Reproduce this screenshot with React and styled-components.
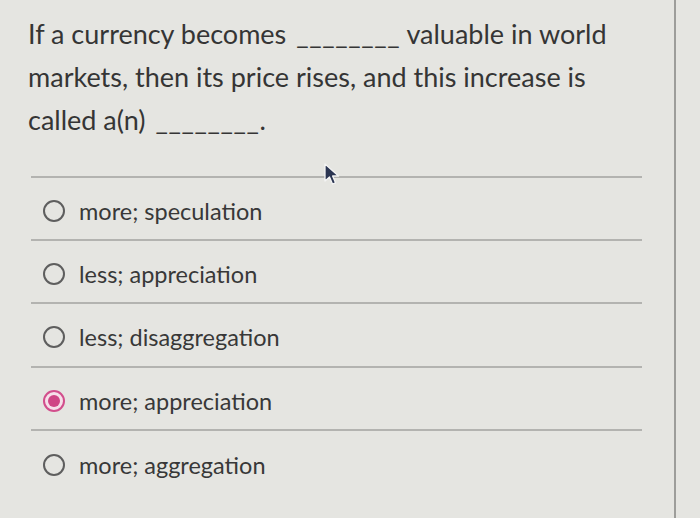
import React from 'react';
import styled, { createGlobalStyle } from 'styled-components';

const GlobalStyle = createGlobalStyle`
  html, body {
    margin: 0;
    padding: 0;
    background: #e5e5e1;
  }
  body {
    font-family: Lato, "Open Sans", sans-serif;
    color: #363636;
  }
`;

const options = [
  { text: 'more; speculation', checked: false },
  { text: 'less; appreciation', checked: false },
  { text: 'less; disaggregation', checked: false },
  { text: 'more; appreciation', checked: true },
  { text: 'more; aggregation', checked: false },
];

function Radio({ checked }) {
  return (
    <RadioCircle checked={checked}>
      {checked && <RadioDot />}
    </RadioCircle>
  );
}

function Cursor() {
  return (
    <CursorWrap>
      <svg width="20" height="24" viewBox="0 0 20 24">
        <path
          d="M2 1 L2 18 L6.5 14 L9.5 21 L12.5 19.8 L9.6 13 L15.5 13 Z"
          fill="#2b3552"
          stroke="#f4f4f4"
          strokeWidth="1.3"
          strokeLinejoin="round"
        />
      </svg>
    </CursorWrap>
  );
}

export default function App() {
  return (
    <>
      <GlobalStyle />
      <Page>
        <Panel>
          <Question>
            If a currency becomes <Blank>________</Blank> valuable in world
            markets, then its price rises, and this increase is called a(n){' '}
            <Blank>________</Blank>.
          </Question>
          <OptionList>
            {options.map((o) => (
              <OptionRow key={o.text}>
                <Radio checked={o.checked} />
                <OptionText>{o.text}</OptionText>
              </OptionRow>
            ))}
          </OptionList>
          <Cursor />
        </Panel>
      </Page>
    </>
  );
}

// Styled Components
const Page = styled.div`
  width: 700px;
  height: 518px;
  overflow: hidden;
  background: #e5e5e1;
`;

const Panel = styled.div`
  position: relative;
  width: 676px;
  height: 518px;
  box-sizing: border-box;
  border-right: 2px solid #9d9d9a;
  padding-top: 12px;
`;

const Question = styled.p`
  margin: 0;
  padding-left: 28px;
  width: 600px;
  font-size: 27px;
  line-height: 43px;
  color: #353535;
`;

const Blank = styled.span`
  letter-spacing: 0.6px;
  margin-left: 3px;
`;

const OptionList = styled.ul`
  list-style: none;
  margin: 35px 0 0 31px;
  padding: 0;
  width: 611px;
  border-top: 2px solid #b3b3b0;
`;

const OptionRow = styled.li`
  display: flex;
  align-items: center;
  gap: 14px;
  height: 63.2px;
  padding: 5px 0 0 12px;
  box-sizing: border-box;
  border-bottom: 2px solid #b3b3b0;

  &:last-child {
    border-bottom: none;
  }
`;

const RadioCircle = styled.span`
  display: flex;
  align-items: center;
  justify-content: center;
  width: 22px;
  height: 22px;
  box-sizing: border-box;
  border-radius: 50%;
  border: ${({ checked }) => (checked ? '2px solid #d24e8c' : '2px solid #5e5e5e')};
  background: ${({ checked }) => (checked ? '#f6dfe9' : 'transparent')};
  flex-shrink: 0;
`;

const RadioDot = styled.span`
  width: 12px;
  height: 12px;
  border-radius: 50%;
  background: #cf4585;
`;

const OptionText = styled.span`
  font-size: 23.5px;
  color: #383838;
`;

const CursorWrap = styled.div`
  position: absolute;
  left: 323px;
  top: 163px;
  line-height: 0;
`;
